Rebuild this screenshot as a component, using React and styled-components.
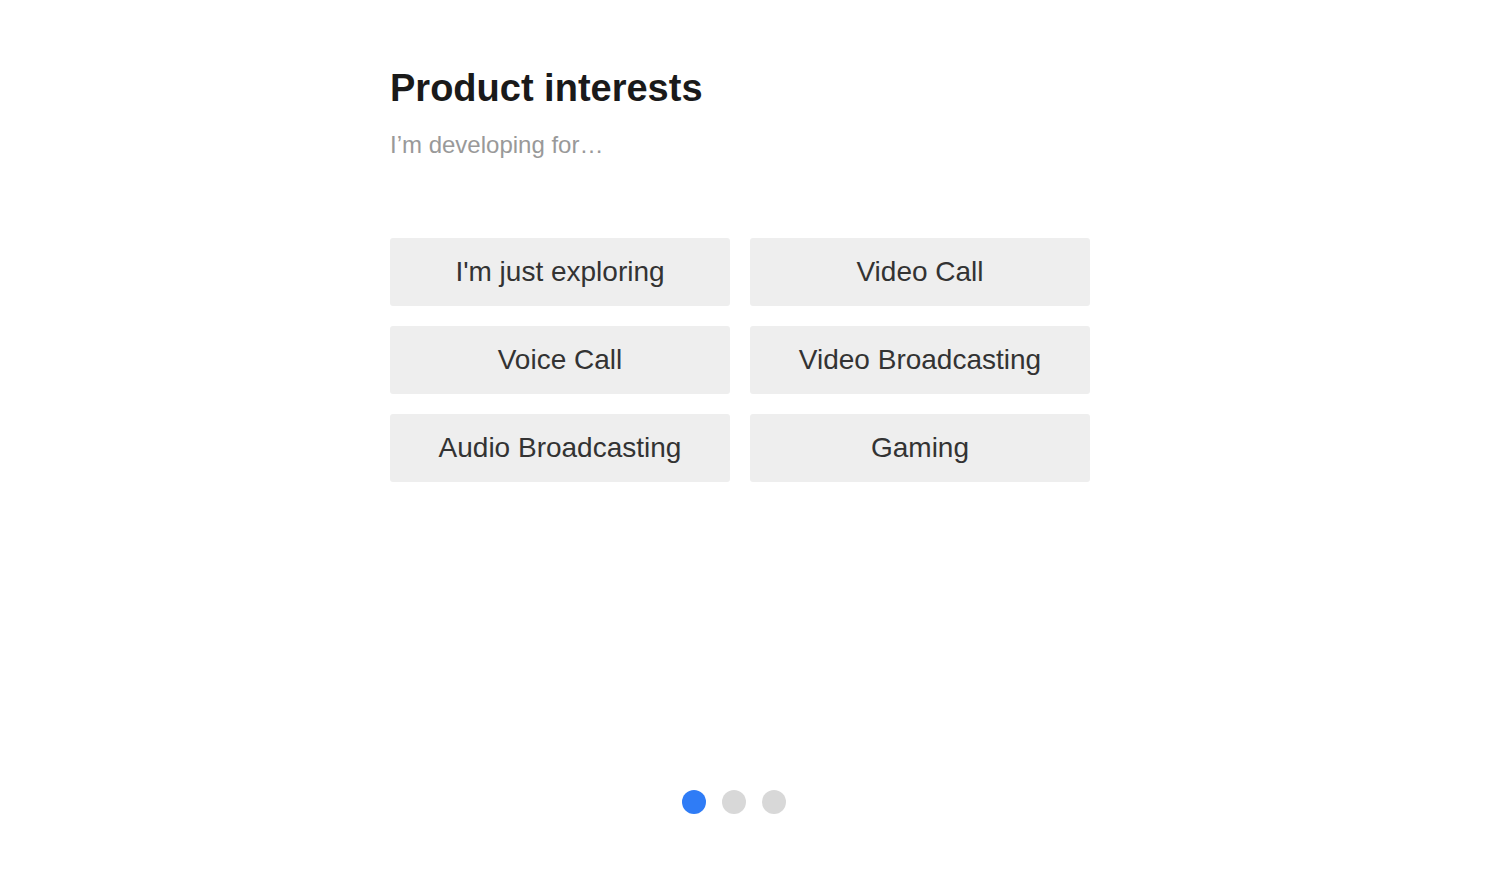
import React from 'react'
import styled, { createGlobalStyle } from 'styled-components'

const GlobalStyle = createGlobalStyle`
  body {
    margin: 0;
    background: #fff;
    font-family: "Liberation Sans", Arial, sans-serif;
  }
`

const Page = styled.div`
  width: 1502px;
  height: 880px;
  display: flex;
  flex-direction: column;
  padding: 66px 0 0 390px;
  box-sizing: border-box;
`

const Title = styled.h1`
  margin: 0;
  font-size: 38px;
  font-weight: 700;
  color: #1a1a1a;
  line-height: 44px;
`

const Subtitle = styled.p`
  margin: 20px 0 0;
  font-size: 24px;
  color: #999;
  line-height: 30px;
`

const Options = styled.div`
  display: grid;
  grid-template-columns: 340px 340px;
  grid-auto-rows: 68px;
  gap: 20px;
  margin-top: 78px;
`

const Option = styled.button`
  border: none;
  border-radius: 3px;
  background: #eeeeee;
  color: #333;
  font-family: inherit;
  font-size: 28px;
  cursor: pointer;
  padding: 0;
`

const Dots = styled.div`
  display: flex;
  gap: 16px;
  margin: auto 0 66px 292px;
`

const Dot = styled.span`
  width: 24px;
  height: 24px;
  border-radius: 50%;
  background: ${p => (p.$active ? '#2f7cf6' : '#d8d8d8')};
`

const options = [
  "I'm just exploring",
  'Video Call',
  'Voice Call',
  'Video Broadcasting',
  'Audio Broadcasting',
  'Gaming'
]

export default function App() {
  return (
    <>
      <GlobalStyle />
      <Page>
        <Title>Product interests</Title>
        <Subtitle>I’m developing for…</Subtitle>
        <Options>
          {options.map(o => (
            <Option key={o}>{o}</Option>
          ))}
        </Options>
        <Dots>
          <Dot $active />
          <Dot />
          <Dot />
        </Dots>
      </Page>
    </>
  )
}
